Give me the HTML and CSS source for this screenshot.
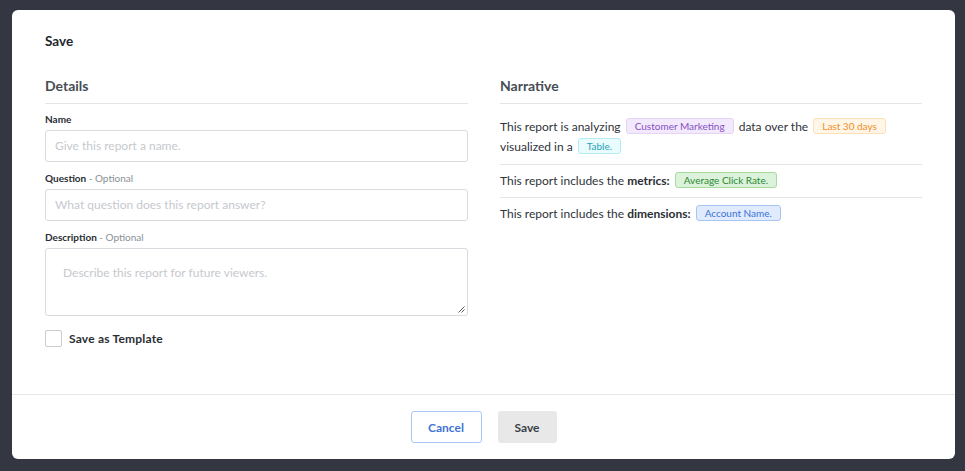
FILE: index.html
```html
<!DOCTYPE html>
<html>
<head>
<meta charset="utf-8">
<link rel="stylesheet" href="styles.css">
</head>
<body>
<div class="modal">
  <div class="modal-main">
    <h1 class="title">Save</h1>
    <div class="cols">
      <section class="col">
        <h2 class="heading">Details</h2>
        <label class="label first">Name</label>
        <div class="input placeholder">Give this report a name.</div>
        <label class="label">Question <span class="opt">- Optional</span></label>
        <div class="input placeholder">What question does this report answer?</div>
        <label class="label">Description <span class="opt">- Optional</span></label>
        <div class="textarea placeholder">Describe this report for future viewers.
          <svg class="grip" width="7" height="7" viewBox="0 0 7 7"><path d="M6.5 0.5 L0.5 6.5 M6.5 3.5 L3.5 6.5" stroke="#555" stroke-width="1" fill="none"/></svg>
        </div>
        <div class="check-row"><span class="checkbox"></span><span class="check-label">Save as Template</span></div>
      </section>
      <section class="col">
        <h2 class="heading">Narrative</h2>
        <p class="row first">This report is analyzing <span class="chip purple">Customer Marketing</span> data over the <span class="chip orange">Last 30 days</span> visualized in a <span class="chip cyan">Table.</span></p>
        <p class="row">This report includes the <b>metrics:</b> <span class="chip green">Average Click Rate.</span></p>
        <p class="row last">This report includes the <b>dimensions:</b> <span class="chip blue">Account Name.</span></p>
      </section>
    </div>
  </div>
  <div class="footer">
    <button class="btn cancel">Cancel</button>
    <button class="btn save">Save</button>
  </div>
</div>
</body>
</html>
```
FILE: styles.css
```css
* { box-sizing: border-box; }
html, body { margin: 0; padding: 0; }
body {
  width: 965px;
  height: 471px;
  background: #343741;
  font-family: Lato, "Open Sans", sans-serif;
  padding: 10px 10px 12px 12px;
  overflow: hidden;
}
.modal {
  width: 943px;
  height: 449px;
  background: #fff;
  border-radius: 6px;
  display: flex;
  flex-direction: column;
}
.modal-main {
  flex: 1;
  padding: 23px 33px 0 33px;
}
.title {
  margin: 0;
  font-size: 13.5px;
  line-height: 16px;
  font-weight: 700;
  color: #22262c;
}
.cols {
  display: flex;
  gap: 32px;
  margin-top: 28px;
}
.col { flex: 0 0 423px; display: flex; flex-direction: column; }
.col + .col { flex-basis: 422px; }
.heading {
  margin: 0;
  font-size: 14px;
  line-height: 18px;
  font-weight: 700;
  color: #474d55;
  padding-bottom: 8px;
  border-bottom: 1px solid #e3e5e8;
}
.label {
  display: block;
  margin-top: 10px;
  font-size: 10px;
  line-height: 12px;
  font-weight: 700;
  color: #2a2e34;
}
.label.first { margin-top: 9px; }
.label .opt { font-weight: 400; color: #8a9097; }
.input, .textarea {
  margin-top: 5px;
  border: 1px solid #d8dbdf;
  border-radius: 3px;
  height: 32px;
  padding: 0 9px;
  font-size: 12px;
  line-height: 30px;
  color: #c6c9ce;
}
.textarea {
  position: relative;
  height: 68px;
  padding: 13px 17px;
  line-height: 22px;
}
.grip { position: absolute; right: 2px; bottom: 2px; }
.check-row {
  display: flex;
  align-items: center;
  margin-top: 14px;
}
.checkbox {
  width: 17px;
  height: 17px;
  border: 1px solid #c9ccd1;
  border-radius: 2px;
}
.check-label {
  margin-left: 7px;
  font-size: 12px;
  font-weight: 700;
  letter-spacing: 0.2px;
  color: #2a2e34;
}
.row {
  margin: 0;
  font-size: 12px;
  line-height: 20px;
  color: #2f333a;
  padding: 6px 0;
  border-bottom: 1px solid #e3e5e8;
}
.row.first { padding: 13px 0 7px; }
.row.last { border-bottom: none; }
.row b { font-weight: 700; color: #2a2e34; }
.chip {
  display: inline-block;
  font-size: 10px;
  line-height: 14px;
  padding: 0 8px;
  border-radius: 3px;
  border: 1px solid;
  margin: 0 2px;
  vertical-align: 1px;
}
.purple { background: #f3e9fc; border-color: #e6d4f6; color: #8650c2; }
.orange { background: #fff6e8; border-color: #fde0b5; color: #ee8f26; }
.cyan { background: #e9fbfd; border-color: #b2ecf2; color: #1fa5b4; }
.green { background: #ddf2da; border-color: #a6da9f; color: #2a8834; }
.blue { background: #e0ebfd; border-color: #a8c5f4; color: #3c72d6; }
.footer {
  border-top: 1px solid #e6e7e9;
  padding: 16px 0;
  display: flex;
  justify-content: center;
  gap: 16px;
}
.btn {
  height: 32px;
  border-radius: 3px;
  font-family: inherit;
  font-size: 12px;
  font-weight: 700;
  padding: 0;
  cursor: pointer;
}
.cancel { width: 71px; background: #fff; border: 1px solid #aac6f4; color: #3f74d6; }
.save { width: 59px; background: #e8e8e8; border: none; color: #3a3f47; }
```
